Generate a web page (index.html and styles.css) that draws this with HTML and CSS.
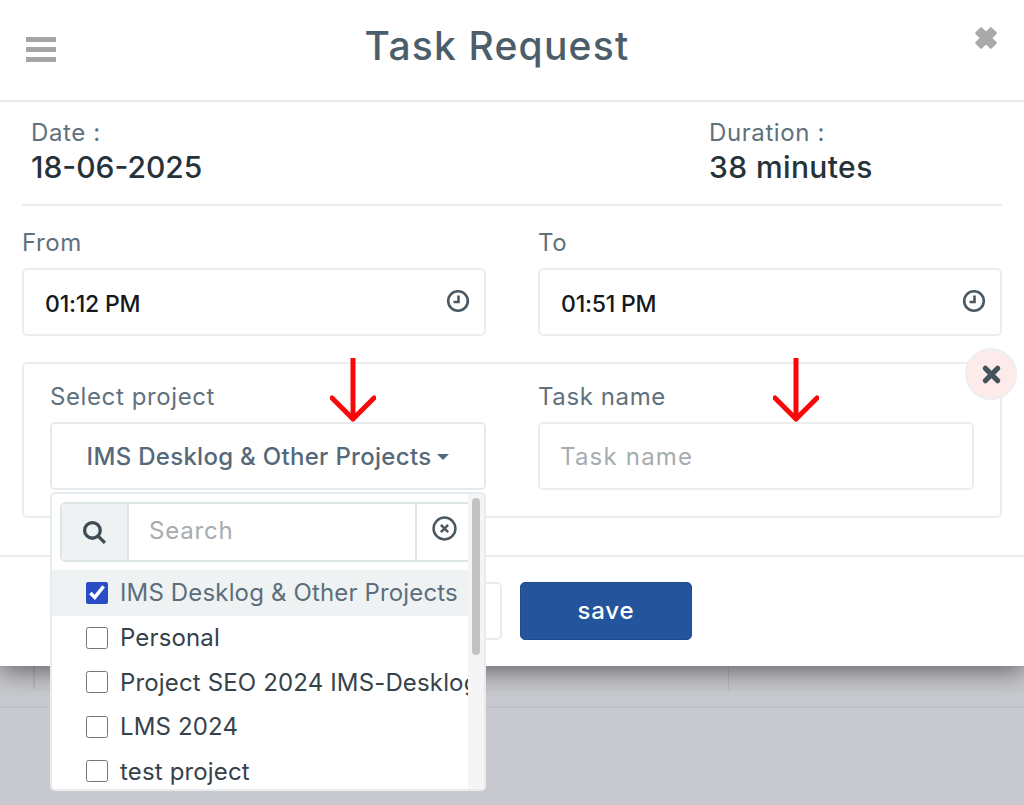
FILE: index.html
```html
<!DOCTYPE html>
<html lang="en">
<head>
<meta charset="utf-8">
<title>Task Request</title>
<link rel="stylesheet" href="styles.css">
</head>
<body>
<div class="modal">
  <header class="modal-head">
    <svg class="burger" viewBox="0 0 30 25"><path d="M0 0h30v5H0zM0 10h30v5H0zM0 20h30v5H0z"/></svg>
    <h1 class="title">Task Request</h1>
    <svg class="close-x" viewBox="0 0 24 24"><path d="M3 7.5 7.5 3 12 7.5 16.500 3 21 7.500 16.500 12 21 16.500 16.500 21 12 16.500 7.500 21 3 16.500 7.500 12z" stroke-linejoin="round" stroke-width="2"/></svg>
  </header>
  <section class="info">
    <div class="info-date">
      <div class="info-label">Date :</div>
      <div class="info-value">18-06-2025</div>
    </div>
    <div class="info-duration">
      <div class="info-label">Duration :</div>
      <div class="info-value">38 minutes</div>
    </div>
  </section>
  <section class="times">
    <div class="field">
      <div class="label">From</div>
      <div class="time-box"><span class="time-text">01:12 PM</span>
        <svg class="clock" viewBox="0 0 24 24"><circle cx="12" cy="12" r="9.800"/><path d="M12.500 6.500v6.500H7.500"/></svg>
      </div>
    </div>
    <div class="field">
      <div class="label">To</div>
      <div class="time-box"><span class="time-text">01:51 PM</span>
        <svg class="clock" viewBox="0 0 24 24"><circle cx="12" cy="12" r="9.800"/><path d="M12.500 6.500v6.500H7.500"/></svg>
      </div>
    </div>
  </section>
  <section class="project-card">
    <div class="field">
      <div class="label">Select project</div>
      <div class="select-box">IMS Desklog &amp; Other Projects<span class="caret"></span></div>
      <div class="menu">
        <div class="menu-list">
          <div class="search">
            <div class="search-icon">
              <svg viewBox="0 0 24 24"><circle cx="10" cy="10" r="7.500"/><path d="m15.500 15.500 6.500 6.500"/></svg>
            </div>
            <input class="search-input" type="text" placeholder="Search">
            <div class="search-clear">
              <svg viewBox="0 0 24 24"><circle cx="12" cy="12" r="10.500"/><path d="m8.500 8.500 7 7m0-7-7 7"/></svg>
            </div>
          </div>
          <label class="opt opt-active"><input type="checkbox" checked><span>IMS Desklog &amp; Other Projects</span></label>
          <label class="opt"><input type="checkbox"><span>Personal</span></label>
          <label class="opt"><input type="checkbox"><span>Project SEO 2024 IMS-Desklog</span></label>
          <label class="opt"><input type="checkbox"><span>LMS 2024</span></label>
          <label class="opt"><input type="checkbox"><span>test project</span></label>
        </div>
        <div class="scroll"><div class="thumb"></div></div>
      </div>
      <svg class="arrow arrow-a" viewBox="0 0 46 64"><path d="M23 1v60M2 40l21 21 21-21"/></svg>
    </div>
    <div class="field">
      <div class="label">Task name</div>
      <input class="task-input" type="text" placeholder="Task name">
      <svg class="arrow arrow-b" viewBox="0 0 46 64"><path d="M23 1v60M2 40l21 21 21-21"/></svg>
    </div>
    <div class="remove">
      <svg viewBox="0 0 24 24"><path d="m5 5 14 14m0-14L5 19"/></svg>
    </div>
  </section>
  <footer class="modal-foot">
    <button class="btn btn-cancel" type="button" aria-label="cancel"></button>
    <button class="btn btn-save" type="button">save</button>
  </footer>
</div>
<div class="backdrop">
  <div class="bg-row"><div class="bg-cell"></div><div class="bg-cell bg-cell-b"></div></div>
</div>
</body>
</html>
```
FILE: styles.css
```css
* { box-sizing: border-box; }
html, body { margin: 0; height: 805px; overflow: hidden; }
body {
  background: #c9cacf;
  font-family: Inter, "Open Sans", sans-serif;
  color: #26323a;
}
.modal {
  position: relative;
  z-index: 2;
  height: 666px;
  background: #fff;
  box-shadow: 0 6px 24px rgba(0, 0, 0, .5);
  display: flex;
  flex-direction: column;
}
.modal-head {
  height: 102px;
  flex: none;
  border-bottom: 2px solid #e8e9ea;
  display: flex;
  justify-content: center;
  position: relative;
  padding-right: 30px;
}
.title {
  margin: 21px 0 0;
  font-size: 39px;
  line-height: 50px;
  letter-spacing: 1.200px;
  font-weight: 500;
  color: #4c5e69;
}
.burger {
  position: absolute;
  left: 26px;
  top: 37px;
  width: 30px;
  height: 25px;
  fill: #a6a4a6;
}
.close-x {
  position: absolute;
  left: 973px;
  top: 25px;
  width: 26px;
  height: 26px;
  fill: #a9a9a9;
  stroke: #a9a9a9;
}
.info {
  flex: none;
  margin: 0 22px;
  height: 104px;
  border-bottom: 2px solid #eceded;
  padding: 15px 0 0 9px;
  display: flex;
}
.info-date { width: 678px; }
.info-label {
  font-size: 24px;
  line-height: 31px;
  letter-spacing: .6px;
  color: #5f717d;
}
.info-value {
  font-size: 30px;
  line-height: 38px;
  font-weight: 500;
  color: #26323a;
}
.info-duration .info-value { letter-spacing: .4px; }
.times {
  flex: none;
  margin: 0 22px;
  padding-top: 22px;
  display: grid;
  grid-template-columns: 464px 464px;
  justify-content: space-between;
}
.label {
  font-size: 24px;
  line-height: 30px;
  letter-spacing: .6px;
  color: #5f717d;
  margin-bottom: 10px;
}
.time-box {
  height: 68px;
  border: 2px solid #ecedee;
  border-radius: 5px;
  padding: 0 14px 0 21px;
  display: flex;
  align-items: center;
  justify-content: space-between;
  font-size: 23px;
  letter-spacing: -.2px;
  font-weight: 500;
  color: #14191d;
}
.time-text { padding-top: 3px; }
.clock {
  width: 24px;
  height: 24px;
  margin-top: -3px;
  fill: none;
  stroke: #4a5862;
  stroke-width: 2.600;
}
.project-card {
  flex: none;
  position: relative;
  margin: 26px 22px 0;
  height: 156px;
  border: 2px solid #ecedee;
  border-radius: 5px;
  padding: 18px 26px 0;
  display: grid;
  grid-template-columns: 436px 436px;
  justify-content: space-between;
}
.project-card .field { position: relative; }
.select-box {
  height: 68px;
  border: 2px solid #e6eaec;
  border-radius: 5px;
  display: flex;
  align-items: center;
  justify-content: center;
  font-size: 24px;
  letter-spacing: .3px;
  font-weight: 500;
  color: #55697a;
}
.caret {
  margin: 2px 0 0 6px;
  border-top: 6px solid #55697a;
  border-left: 6px solid transparent;
  border-right: 6px solid transparent;
}
.task-input {
  display: block;
  width: 100%;
  height: 68px;
  border: 2px solid #ecedee;
  border-radius: 5px;
  padding: 0 20px;
  font: 24px Inter, "Open Sans", sans-serif;
  letter-spacing: 1.200px;
  outline: none;
}
.task-input::placeholder, .search-input::placeholder { color: #a6acb0; opacity: 1; }
.menu {
  position: absolute;
  z-index: 3;
  left: 0;
  top: 110px;
  width: 436px;
  height: 299px;
  background: #fff;
  border: 2px solid #e8ecee;
  border-radius: 5px;
  display: flex;
  overflow: hidden;
}
.menu-list {
  width: 416px;
  flex: none;
  overflow: hidden;
  padding-top: 8px;
}
.scroll {
  flex: 1;
  background: #f5f5f5;
  padding: 4px 4px 0 4px;
}
.thumb {
  width: 8px;
  height: 157px;
  border-radius: 4px;
  background: #c2c2c2;
}
.search {
  margin-left: 8px;
  width: 410px;
  height: 60px;
  display: flex;
  border: 2px solid #dce4e7;
  border-right: 0;
  border-radius: 6px 0 0 6px;
}
.search-icon {
  width: 67px;
  flex: none;
  background: #eef2f3;
  border-right: 2px solid #dce4e7;
  border-radius: 6px 0 0 6px;
  display: flex;
  align-items: center;
  justify-content: center;
}
.search-icon svg {
  width: 25px;
  height: 25px;
  fill: none;
  stroke: #3f4c55;
  stroke-width: 3.200;
}
.search-input {
  width: 288px;
  flex: none;
  border: 0;
  border-right: 2px solid #dce4e7;
  padding: 0 20px 3px;
  font: 24px Inter, "Open Sans", sans-serif;
  letter-spacing: .8px;
  outline: none;
  min-width: 0;
}
.search-clear {
  flex: 1;
  display: flex;
  padding: 12px 0 0 15px;
}
.search-clear svg {
  width: 25px;
  height: 25px;
  fill: none;
  stroke: #4a5862;
  stroke-width: 2.400;
}
.opt {
  display: flex;
  align-items: center;
  height: 44.500px;
  padding-left: 34px;
  font-size: 24px;
  letter-spacing: .15px;
  color: #36424a;
  white-space: nowrap;
  overflow: hidden;
}
.search + .opt { margin-top: 8px; height: 45.500px; }
.opt input {
  width: 22px;
  height: 22px;
  margin: 0 12px 0 0;
  flex: none;
  accent-color: #2a4cc4;
}
.opt-active { background: #eef2f3; color: #5c6e7b; }
.arrow {
  position: absolute;
  z-index: 4;
  width: 46px;
  height: 64px;
  top: -24px;
  fill: none;
  stroke: #f90808;
  stroke-width: 5;
  stroke-linecap: round;
  stroke-linejoin: round;
  pointer-events: none;
}
.arrow-a { left: 280px; }
.arrow-b { left: 235px; }
.remove {
  position: absolute;
  z-index: 3;
  right: -17px;
  top: -16px;
  width: 52px;
  height: 52px;
  border-radius: 50%;
  background: #fdeaea;
  border: 2px solid #eeeeee;
  display: flex;
  align-items: center;
  justify-content: center;
}
.remove svg {
  width: 21px;
  height: 21px;
  fill: none;
  stroke: #45535d;
  stroke-width: 6;
  stroke-linecap: round;
}
.modal-foot {
  flex: none;
  margin-top: 37px;
  height: 111px;
  border-top: 2px solid #ecedee;
  padding: 25px 2px 0 0;
  display: flex;
  justify-content: center;
  gap: 18px;
}
.btn {
  width: 172px;
  height: 58px;
  border-radius: 5px;
  padding: 0 0 2px;
  font: 500 24px Inter, "Open Sans", sans-serif;
  letter-spacing: .8px;
}
.btn-cancel {
  background: #fff;
  border: 2px solid #e8ecee;
  color: #55697a;
}
.btn-save {
  background: #24549b;
  border: 1px solid #1f4a90;
  color: #fff;
}
.backdrop { height: 139px; }
.bg-row {
  height: 42px;
  border-bottom: 2px solid #c1c2c7;
  padding-left: 33px;
}
.bg-cell {
  height: 24px;
  border-bottom: 1px solid #c3c4c9;
  border-left: 2px solid #b9bbc2;
  position: relative;
}
.bg-cell-b {
  position: relative;
  height: 24px;
  border: 0;
  border-left: 1px solid #b7b8bc;
  left: 695px;
  top: -24px;
  width: 1px;
}
```
